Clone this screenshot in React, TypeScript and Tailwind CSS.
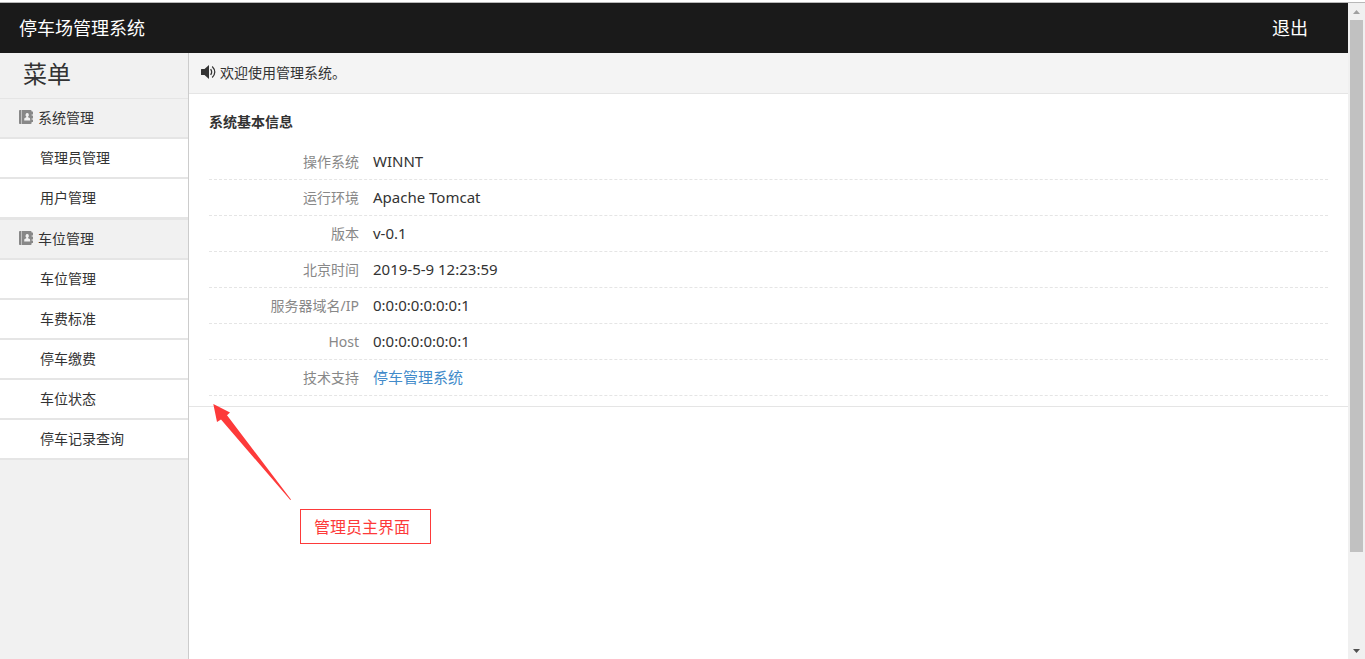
import React from "react";

interface MenuGroup {
    title: string;
    items: string[];
}

interface InfoRow {
    label: string;
    value: string;
    href?: string;
}

const menus: MenuGroup[] = [
    { title: "系统管理", items: ["管理员管理", "用户管理"] },
    { title: "车位管理", items: ["车位管理", "车费标准", "停车缴费", "车位状态", "停车记录查询"] },
];

const infos: InfoRow[] = [
    { label: "操作系统", value: "WINNT" },
    { label: "运行环境", value: "Apache Tomcat" },
    { label: "版本", value: "v-0.1" },
    { label: "北京时间", value: "2019-5-9 12:23:59" },
    { label: "服务器域名/IP", value: "0:0:0:0:0:0:0:1" },
    { label: "Host", value: "0:0:0:0:0:0:0:1" },
    { label: "技术支持", value: "停车管理系统", href: "#" },
];

const BookIcon = () => (
    <svg className="mb-[2px]" width="16" height="16" viewBox="0 0 16 16" fill="#888888" aria-hidden="true">
        <path d="M1.800 1H3.100V15H1.800Q1 15 1 14.200V1.800Q1 1 1.800 1Z" />
        <path fillRule="evenodd" d="M3.600 1H12.500Q13.600 1 13.600 2.100V2.500H14.600Q15 2.500 15 3V5Q15 5.500 14.600 5.500H13.600V6.500H14.600Q15 6.500 15 7V9Q15 9.500 14.600 9.500H13.600V10.500H14.600Q15 10.500 15 11V12.500Q15 13 14.600 13H13.600V13.900Q13.600 15 12.500 15H3.600ZM9.200 4A1.700 1.900 0 0 0 8.300 7.500Q8.500 8.100 7.900 8.400L6.600 9.100Q6.200 9.400 6.200 11.500H12.200Q12.200 9.400 11.800 9.100L10.500 8.400Q9.900 8.100 10.100 7.500A1.700 1.900 0 0 0 9.200 4Z" />
    </svg>
);

const VolumeIcon = () => (
    <svg className="mb-[2px]" width="16" height="16" viewBox="0 0 16 16" fill="none" stroke="#333333" aria-hidden="true">
        <path d="M1.500 5H4.500L9 1V15L4.500 11H1.500Q1 11 1 10.500V5.500Q1 5 1.500 5Z" fill="#333333" stroke="none" />
        <path d="M10.700 5Q12.700 8 10.700 11" strokeWidth="1.200" />
        <path d="M12.200 2.500Q17.400 8 12.200 13.500" strokeWidth="1.200" />
    </svg>
);

const Header = () => (
    <header className="flex h-[50px] items-center justify-between bg-[#1a1a1a] pr-10 pl-[19px] text-white">
        <a href="#" className="text-lg">停车场管理系统</a>
        <a href="#" className="text-lg">退出</a>
    </header>
);

const Sidebar = () => (
    <nav className="w-[189px] shrink-0 border-r border-[#cccccc] bg-[#f1f1f1]">
        <h1 className="h-[45px] pl-[23px] text-2xl leading-[42px]">菜单</h1>
        {menus.map((menu) => (
            <section key={menu.title} className="border-t border-[#e5e5e5]">
                <h2 className="flex h-10 items-center gap-1 border-b-2 border-[#e5e5e5] pl-[18px] text-sm">
                    <BookIcon />
                    {menu.title}
                </h2>
                <ul>
                    {menu.items.map((item) => (
                        <li key={item} className="border-b-2 border-[#e5e5e5] bg-white">
                            <a href="#" className="flex h-[38px] items-center pl-10 text-sm">{item}</a>
                        </li>
                    ))}
                </ul>
            </section>
        ))}
    </nav>
);

const Annotation = () => (
    <>
        <svg className="absolute top-[350px] left-6" width="80" height="98" viewBox="0 0 80 98" fill="#fd3a3a" aria-hidden="true">
            <path d="M.3 1L17 9.500L14 12.200L78 96.500L77.300 97L8 16.500L4 19Z" />
        </svg>
        <div className="absolute top-[456px] left-[111px] border border-[#fd3a3a] pt-px pr-5 pl-[13px] text-base leading-8 text-[#fd3a3a]">
            管理员主界面
        </div>
    </>
);

const Scrollbar = () => (
    <div className="flex w-[17px] shrink-0 flex-col items-center bg-[#f0f0f0]" aria-hidden="true">
        <svg width="17" height="17" viewBox="0 0 17 17" fill="#a0a0a0">
            <path d="M5 11L8.500 7L12 11Z" />
        </svg>
        <div className="w-[13px] grow-[532] bg-[#c1c1c1]" />
        <div className="grow-[90]" />
        <svg width="17" height="17" viewBox="0 0 17 17" fill="#505050">
            <path d="M5 7L8.500 11L12 7Z" />
        </svg>
    </div>
);

const App = () => {
    return (
        <div className="flex min-h-screen flex-col bg-white pt-[2px] font-['Noto_Sans','Noto_Sans_CJK_SC',sans-serif] text-[#333333]">
            <div className="flex grow border-t border-[#b8b8b8]">
                <div className="flex min-w-0 grow flex-col">
                    <Header />
                    <div className="flex grow">
                        <Sidebar />
                        <main className="relative min-w-0 grow">
                            <p className="flex h-[41px] items-center gap-1 border-b border-[#e5e5e5] bg-[#f4f4f4] pl-[11px] text-sm">
                                <VolumeIcon />
                                欢迎使用管理系统。
                            </p>
                            <section className="border-b border-[#e5e5e5] px-5 pt-[18px] pb-[10px]">
                                <h2 className="mb-3 text-sm font-bold">系统基本信息</h2>
                                <dl>
                                    {infos.map((info) => (
                                        <div key={info.label} className="flex h-9 items-center gap-[14px] border-b border-dashed border-[#e5e5e5]">
                                            <dt className="w-[150px] text-right text-sm text-[#888888]">{info.label}</dt>
                                            <dd className="pb-[2px] text-[15px] leading-5">
                                                {info.href ? <a href={info.href} className="text-[#428bca]">{info.value}</a> : info.value}
                                            </dd>
                                        </div>
                                    ))}
                                </dl>
                            </section>
                            <Annotation />
                        </main>
                    </div>
                </div>
                <Scrollbar />
            </div>
        </div>
    );
};
export default App;
